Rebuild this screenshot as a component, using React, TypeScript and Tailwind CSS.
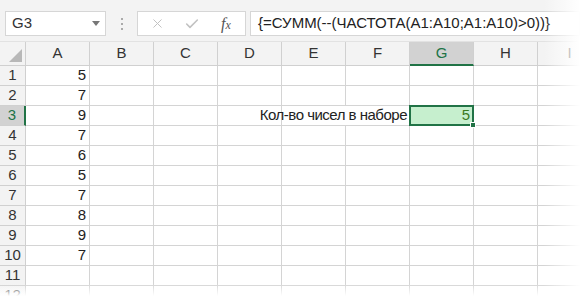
import { X, Check } from "lucide-react";

const cols = ["A", "B", "C", "D", "E", "F", "G", "H", "I"];
const values: Record<number, string> = {
  1: "5",
  2: "7",
  3: "9",
  4: "7",
  5: "6",
  6: "5",
  7: "7",
  8: "8",
  9: "9",
  10: "7",
};
const rows = Array.from({ length: 12 }, (_, i) => i + 1);

const font = "font-['Liberation_Sans',Arial,sans-serif]";

function Toolbar() {
  return (
    <div className="flex h-[42px] items-start bg-[#f3f3f3] pl-[5px] pt-[11px] border-b border-[#e2e2e2]">
      <div className="flex h-[25px] w-[101px] items-center justify-between border border-[#d6d6d6] bg-white pl-[6px] pr-[5px] text-[15px] text-[#333]">
        <span>G3</span>
        <span className="h-0 w-0 border-x-[4px] border-t-[5px] border-x-transparent border-t-[#777]" />
      </div>
      <div className="flex h-[25px] w-[31px] flex-col items-center justify-center gap-[3px]">
        <span className="h-[2px] w-[2px] bg-[#aaa]" />
        <span className="h-[2px] w-[2px] bg-[#aaa]" />
        <span className="h-[2px] w-[2px] bg-[#aaa]" />
      </div>
      <div className="flex h-[25px] w-[109px] items-center border border-[#d6d6d6] bg-white">
        <div className="flex w-[38px] justify-center">
          <X size={15} strokeWidth={1.6} className="text-[#c2c2c2]" />
        </div>
        <div className="flex w-[32px] justify-center">
          <Check size={16} strokeWidth={2.4} className="text-[#c2c2c2]" />
        </div>
        <div className="flex w-[36px] items-baseline justify-center font-['Liberation_Serif',serif] text-[16px] italic text-[#555]">
          <span>f</span>
          <span className="text-[12px]">x</span>
        </div>
      </div>
      <div className="ml-[4px] flex h-[25px] flex-1 items-center border border-[#d6d6d6] bg-white pl-[7px] text-[15px] text-[#222] whitespace-nowrap">
        {"{=СУММ(--(ЧАСТОТА(A1:A10;A1:A10)>0))}"}
      </div>
    </div>
  );
}

function Sheet() {
  return (
    <div className="grid grid-cols-[26px_repeat(9,64px)] grid-rows-[24px_repeat(12,20px)] text-[15px] text-[#222]">
      <div className="relative border-b border-r border-[#d0d0d0] bg-[#f3f3f3]">
        <span className="absolute bottom-[3px] right-[3px] h-0 w-0 border-b-[13px] border-l-[13px] border-b-[#b8b8b8] border-l-transparent" />
      </div>
      {cols.map((c) => (
        <div
          key={c}
          className={
            c === "G"
              ? "flex items-center justify-center border-b-2 border-r border-b-[#217346] border-r-[#d0d0d0] bg-[#d2d2d2] text-[#217346]"
              : "flex items-center justify-center border-b border-r border-[#d0d0d0] bg-[#f3f3f3] text-[#333]"
          }
        >
          {c}
        </div>
      ))}
      {rows.map((r) => (
        <Row key={r} r={r} />
      ))}
    </div>
  );
}

function Row({ r }: { r: number }) {
  return (
    <>
      <div
        className={
          r === 3
            ? "flex items-center justify-center border-b border-r-2 border-b-[#d0d0d0] border-r-[#217346] bg-[#d2d2d2] text-[#217346]"
            : "flex items-center justify-center border-b border-r border-[#d0d0d0] bg-[#f3f3f3] text-[#333]"
        }
      >
        {r}
      </div>
      {cols.map((c) => {
        if (c === "A")
          return (
            <div key={c} className="flex items-center justify-end border-b border-r border-[#d4d4d4] pr-[3px]">
              {values[r] ?? ""}
            </div>
          );
        if (r === 3 && c === "F")
          return (
            <div key={c} className="flex items-center justify-end overflow-visible whitespace-nowrap border-b border-[#d4d4d4] pr-[3px] tracking-[-0.5px]">
              Кол-во чисел в наборе
            </div>
          );
        if (r === 3 && c === "E")
          return <div key={c} className="border-b border-[#d4d4d4]" />;
        if (r === 3 && c === "G")
          return (
            <div key={c} className="relative border-b border-r border-[#d4d4d4]">
              <div className="absolute -left-[1px] -top-[1px] flex h-[21px] w-[65px] items-center justify-end border-2 border-[#217346] bg-[#c6efce] pr-[2px] text-[#3c7a1e]">
                5
              </div>
              <span className="absolute -bottom-[3px] -right-[3px] h-[6px] w-[6px] border border-white bg-[#217346]" />
            </div>
          );
        return <div key={c} className="border-b border-r border-[#d4d4d4]" />;
      })}
    </>
  );
}

export default function App() {
  return (
    <div className={`relative h-[296px] w-[580px] overflow-hidden bg-white ${font}`}>
      <Toolbar />
      <Sheet />
      <div className="pointer-events-none absolute right-0 top-0 h-full w-[36px] bg-gradient-to-r from-white/0 to-white" />
      <div className="pointer-events-none absolute bottom-0 left-0 h-[12px] w-full bg-gradient-to-b from-white/0 to-white" />
    </div>
  );
}
